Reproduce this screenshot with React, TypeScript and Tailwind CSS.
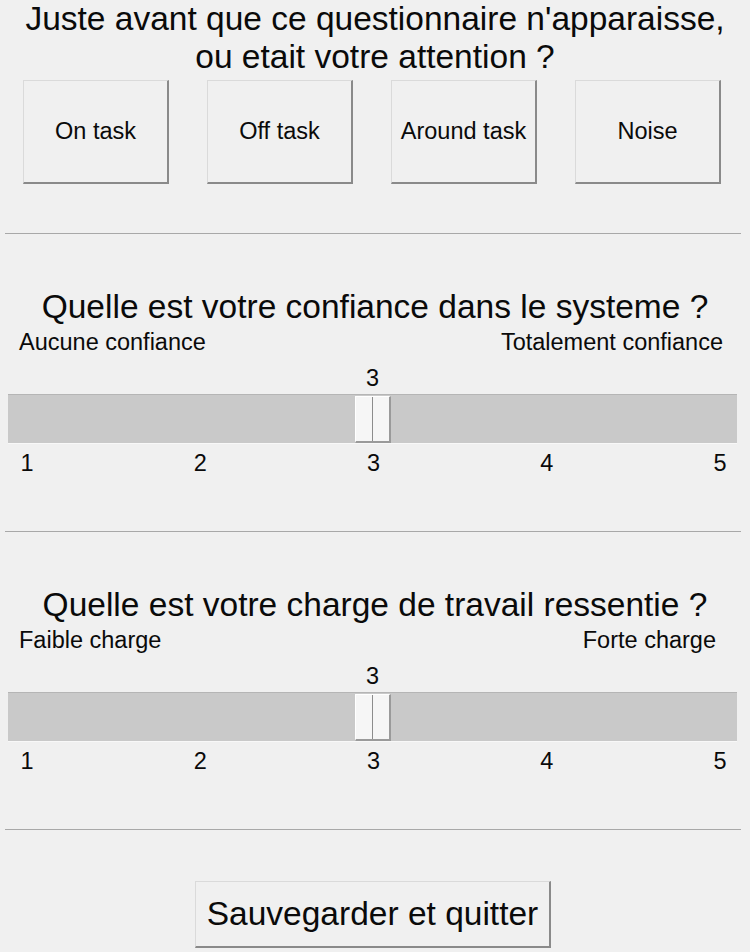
import React from "react";

const font = { fontFamily: '"Liberation Sans", Arial, sans-serif' };

function Divider() {
  return <div className="ml-[5px] h-px w-[736px] bg-[#a8a8a8]" />;
}

function Slider({
  title,
  left,
  right,
  rightPad,
  value,
}: {
  title: string;
  left: string;
  right: string;
  rightPad: string;
  value: number;
}) {
  const frac = (value - 1) / 4;
  return (
    <div className="flex flex-col">
      <div className="mt-[54px] text-center text-[33.5px] leading-[38px] text-[#0a0a0a]">
        {title}
      </div>
      <div className={`mt-[2px] flex justify-between pl-[19px] ${rightPad} text-[23.5px] leading-[28px] text-[#0a0a0a]`}>
        <span>{left}</span>
        <span>{right}</span>
      </div>
      <div className="mt-[8px] ml-[8px] w-[729px] px-[18px]">
        <div className="relative h-[28px]">
          <span
            className="absolute top-0 -translate-x-1/2 text-[23.5px] leading-[28px] text-[#0a0a0a]"
            style={{ left: `${frac * 100}%` }}
          >
            {value}
          </span>
        </div>
      </div>
      <div className="mt-[2px] ml-[8px] w-[729px] h-[50px] bg-[#c9c9c9] border-t border-[#b5b5b5] border-b border-b-[#f8f8f8]">
        <div className="relative h-full">
          <div
            className="absolute top-px h-[47px] w-[36px] bg-[#f6f6f6] border-l border-t border-white border-r-2 border-b-2 border-r-[#9a9a9a] border-b-[#9a9a9a] flex justify-center"
            style={{ left: `${frac * 693}px` }}
          >
            <div className="w-px h-full bg-[#8c8c8c]" />
          </div>
        </div>
      </div>
      <div className="mt-[5px] ml-[17px] w-[713px] flex justify-between text-[23.5px] leading-[28px] text-[#0a0a0a]">
        {[1, 2, 3, 4, 5].map((n) => (
          <span key={n} className="w-[20px] text-center">
            {n}
          </span>
        ))}
      </div>
      <div className="mt-[54px]">
        <Divider />
      </div>
    </div>
  );
}

function TaskButton({ label }: { label: string }) {
  return (
    <button className="w-[146px] h-[104px] bg-[#f0f0f0] border-l border-t border-[#dadada] border-r-2 border-b-2 border-r-[#8a8a8a] border-b-[#8a8a8a] text-[23.5px] text-[#0a0a0a] flex items-center justify-center">
      {label}
    </button>
  );
}

export default function App() {
  return (
    <div style={font} className="w-[750px] h-[952px] bg-[#f0f0f0] overflow-hidden flex flex-col">
      <div className="text-center text-[33.5px] leading-[38px] text-[#0a0a0a]">
        <div>Juste avant que ce questionnaire n'apparaisse,</div>
        <div>ou etait votre attention ?</div>
      </div>
      <div className="mt-[4px] ml-[23px] flex gap-[38px]">
        <TaskButton label="On task" />
        <TaskButton label="Off task" />
        <TaskButton label="Around task" />
        <TaskButton label="Noise" />
      </div>
      <div className="mt-[49px]">
        <Divider />
      </div>
      <Slider
        title="Quelle est votre confiance dans le systeme ?"
        left="Aucune confiance"
        right="Totalement confiance"
        rightPad="pr-[27px]"
        value={3}
      />
      <Slider
        title="Quelle est votre charge de travail ressentie ?"
        left="Faible charge"
        right="Forte charge"
        rightPad="pr-[34px]"
        value={3}
      />
      <div className="mt-[51px] ml-[195px]">
        <button className="w-[356px] h-[67px] bg-[#f0f0f0] border-l border-t border-[#dadada] border-r-2 border-b-2 border-r-[#8a8a8a] border-b-[#8a8a8a] text-[33.5px] text-[#0a0a0a] flex items-center justify-center">
          Sauvegarder et quitter
        </button>
      </div>
    </div>
  );
}
